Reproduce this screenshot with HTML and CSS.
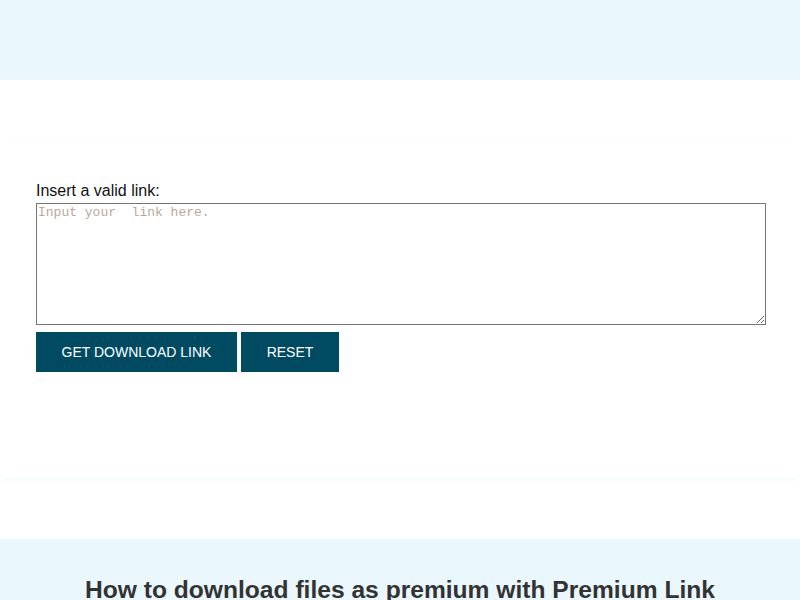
FILE: index.html
```html
<!DOCTYPE html>
<html lang="en">
<head>
<meta charset="utf-8">
<title>Premium Link</title>
<link rel="stylesheet" href="styles.css">
</head>
<body>
<header class="top-band"></header>
<div class="spacer-top"></div>
<main class="card">
  <form class="link-form">
    <label class="label" for="links">Insert a valid link:</label>
    <textarea id="links" class="links" placeholder="Input your  link here."></textarea>
    <div class="actions">
      <button type="button" class="btn btn-get">GET DOWNLOAD LINK</button>
      <button type="reset" class="btn btn-reset">RESET</button>
    </div>
  </form>
</main>
<section class="howto">
  <h2 class="howto-title">How to download files as premium with Premium Link</h2>
</section>
</body>
</html>
```
FILE: styles.css
```css
html, body {
  margin: 0;
  padding: 0;
  background: #ffffff;
  font-family: "Liberation Sans", Arial, sans-serif;
}
.top-band {
  height: 80px;
  background: #eaf8fd;
}
.spacer-top {
  height: 59px;
}
.card {
  background: #ffffff;
  border-radius: 6px;
  box-shadow: 0 1px 4px rgba(190, 235, 248, 0.3);
  padding: 43px 34px 106px 36px;
  margin-bottom: 61px;
}
.link-form {
  display: flex;
  flex-direction: column;
}
.label {
  font-size: 16px;
  line-height: 18px;
  color: #111111;
  margin-bottom: 3px;
}
.links {
  box-sizing: border-box;
  width: 730px;
  height: 122px;
  margin: 0;
  padding: 1px;
  border: 1px solid #767676;
  font-family: "Liberation Mono", "Courier New", monospace;
  font-size: 13px;
  resize: both;
}
.links::placeholder {
  color: #bba898;
}
.actions {
  display: flex;
  gap: 4px;
  margin-top: 7px;
}
.btn {
  height: 40px;
  border: none;
  background: #004a62;
  color: #ffffff;
  font-family: "Liberation Sans", Arial, sans-serif;
  font-size: 14px;
  padding: 0;
  cursor: pointer;
}
.btn-get { width: 201px; }
.btn-reset { width: 98px; }
.howto {
  background: #eaf8fd;
  padding-top: 37px;
  height: 200px;
}
.howto-title {
  margin: 0;
  text-align: center;
  font-size: 24.6px;
  font-weight: bold;
  color: #333333;
}
```
